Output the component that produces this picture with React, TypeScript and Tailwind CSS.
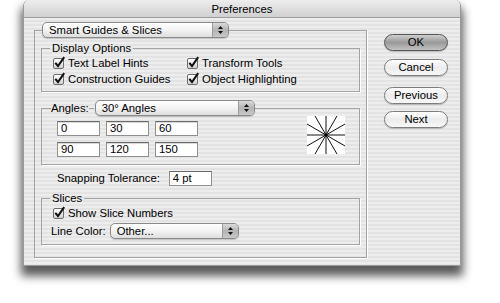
import React from 'react';

const stripes =
  'bg-[repeating-linear-gradient(to_bottom,#ededed_0px,#ededed_2px,#e3e3e3_2px,#e3e3e3_4px)]';

function Checkbox({ label }: { label: string }) {
  return (
    <div className="flex h-[16px] items-center">
      <span className="relative h-[11px] w-[11px] rounded-[2px] border border-[#6e6e6e] bg-gradient-to-b from-white to-[#d2d2d2]">
        <svg className="absolute -left-[1px] -top-[3px]" width="13" height="13" viewBox="0 0 13 13">
          <path d="M2.3 6.8 L5 10 L11.2 1.2" fill="none" stroke="#111" strokeWidth="2" />
        </svg>
      </span>
      <span className="ml-[4px] leading-[14px]">{label}</span>
    </div>
  );
}

function Popup({ label, className }: { label: string; className: string }) {
  return (
    <div
      className={`flex h-[16px] items-stretch rounded-[5px] border border-[#8a8a8a] bg-gradient-to-b from-white via-[#f3f3f3] to-[#dedede] shadow-[0_1px_1px_rgba(0,0,0,0.18)] ${className}`}
    >
      <span className="flex-1 truncate pl-[6px] leading-[14px]">{label}</span>
      <span className="flex w-[16px] flex-col items-center justify-center gap-[2px] rounded-r-[4px] border-l border-[#9c9c9c] bg-gradient-to-b from-[#dadada] via-[#b4b4b4] to-[#c8c8c8]">
        <svg width="5" height="3" viewBox="0 0 5 3">
          <path d="M0 3 L2.5 0 L5 3 Z" fill="#111" />
        </svg>
        <svg width="5" height="3" viewBox="0 0 5 3">
          <path d="M0 0 L2.5 3 L5 0 Z" fill="#111" />
        </svg>
      </span>
    </div>
  );
}

function Field({ value }: { value: string }) {
  return (
    <div className="h-[15px] w-[43px] border border-[#909090] border-t-[#6a6a6a] bg-white pl-[3px] leading-[13px] shadow-[inset_0_1px_0_#d8d8d8]">
      {value}
    </div>
  );
}

function Button({ label, primary = false, className = '' }: { label: string; primary?: boolean; className?: string }) {
  return (
    <button
      className={`h-[17px] w-[64px] rounded-full border text-[11.3px] leading-[15px] shadow-[0_1px_1px_rgba(0,0,0,0.2)] ${
        primary
          ? 'border-[#555555] bg-gradient-to-b from-[#cfcfcf] via-[#999999] to-[#c2c2c2]'
          : 'border-[#7c7c7c] bg-gradient-to-b from-white via-[#ececec] to-[#f7f7f7]'
      } ${className}`}
    >
      {label}
    </button>
  );
}

function Star() {
  const angles = [0, 30, 60, 90, 120, 150];
  return (
    <svg width="38" height="38" viewBox="0 0 38 38" className="bg-white">
      {angles.map((a) => {
        const r = (a * Math.PI) / 180;
        const dx = Math.cos(r) * 30;
        const dy = Math.sin(r) * 30;
        return <line key={a} x1={19 - dx} y1={19 - dy} x2={19 + dx} y2={19 + dy} stroke="#111" strokeWidth="1" />;
      })}
      <circle cx="19" cy="19" r="1.5" fill="#000" />
    </svg>
  );
}

export default function App() {
  return (
    <div className="h-[303px] w-[500px] overflow-hidden bg-white font-['Liberation_Sans',Arial,sans-serif] text-[11.3px] text-black">
      <div className="ml-[23px] flex h-[266px] w-[438px] flex-col rounded-t-[6px] border-x border-b border-[#9a9a9a] shadow-[0_8px_10px_2px_rgba(0,0,0,0.65)]">
        {/* Title bar */}
        <div className="flex h-[18px] items-center justify-center rounded-t-[6px] border-b border-[#9d9d9d] bg-gradient-to-b from-[#eeeeee] to-[#d0d0d0] leading-[14px]">
          Preferences
        </div>

        <div className={`flex flex-1 ${stripes}`}>
          {/* Main panel */}
          <div className="pl-[10px] pt-[4px]">
            <fieldset className="w-[333px] border border-[#a3a3a3] px-[6px] pb-[12px] shadow-[1px_1px_0_#fff]">
              <legend className="ml-[1px]">
                <Popup label="Smart Guides & Slices" className="w-[187px]" />
              </legend>

              <fieldset className="mt-[3px] border border-[#a3a3a3] pb-[4px] shadow-[1px_1px_0_#fff]">
                <legend className="ml-[8px] px-[2px] leading-[14px]">Display Options</legend>
                <div className="grid grid-cols-[134px_auto] pl-[11px]">
                  <Checkbox label="Text Label Hints" />
                  <Checkbox label="Transform Tools" />
                  <Checkbox label="Construction Guides" />
                  <Checkbox label="Object Highlighting" />
                </div>
              </fieldset>

              <fieldset className="mt-[8px] border border-[#a3a3a3] pb-[7px] shadow-[1px_1px_0_#fff]">
                <legend className="ml-[9px] flex items-center">
                  <span className="leading-[14px]">Angles:</span>
                  <span className="h-px w-[5px] bg-[#a3a3a3]" />
                  <Popup label="30° Angles" className="ml-[1px] w-[160px]" />
                </legend>
                <div className="flex items-start pl-[15px]">
                  <div className="mt-[5px] grid grid-cols-[43px_43px_43px] gap-[6px]">
                    <Field value="0" />
                    <Field value="30" />
                    <Field value="60" />
                    <Field value="90" />
                    <Field value="120" />
                    <Field value="150" />
                  </div>
                  <div className="ml-auto mr-[14px]">
                    <Star />
                  </div>
                </div>
              </fieldset>

              <div className="mt-[6px] flex h-[15px] items-center pl-[16px]">
                <span>Snapping Tolerance:</span>
                <div className="ml-[9px] h-[15px] w-[43px] border border-[#909090] border-t-[#6a6a6a] bg-white pl-[3px] leading-[13px]">
                  4 pt
                </div>
              </div>

              <fieldset className="mt-[5px] border border-[#a3a3a3] pb-[5px] shadow-[1px_1px_0_#fff]">
                <legend className="ml-[8px] px-[2px] leading-[14px]">Slices</legend>
                <div className="pl-[11px]">
                  <Checkbox label="Show Slice Numbers" />
                </div>
                <div className="mt-[2px] flex h-[16px] items-center pl-[9px]">
                  <span>Line Color:</span>
                  <Popup label="Other..." className="ml-[4px] w-[129px]" />
                </div>
              </fieldset>
            </fieldset>
          </div>

          {/* Buttons */}
          <div className="ml-[17px] flex flex-col pt-[16px]">
            <Button label="OK" primary />
            <Button label="Cancel" className="mt-[8px]" />
            <Button label="Previous" className="mt-[11px]" />
            <Button label="Next" className="mt-[7px]" />
          </div>
        </div>
      </div>
    </div>
  );
}
